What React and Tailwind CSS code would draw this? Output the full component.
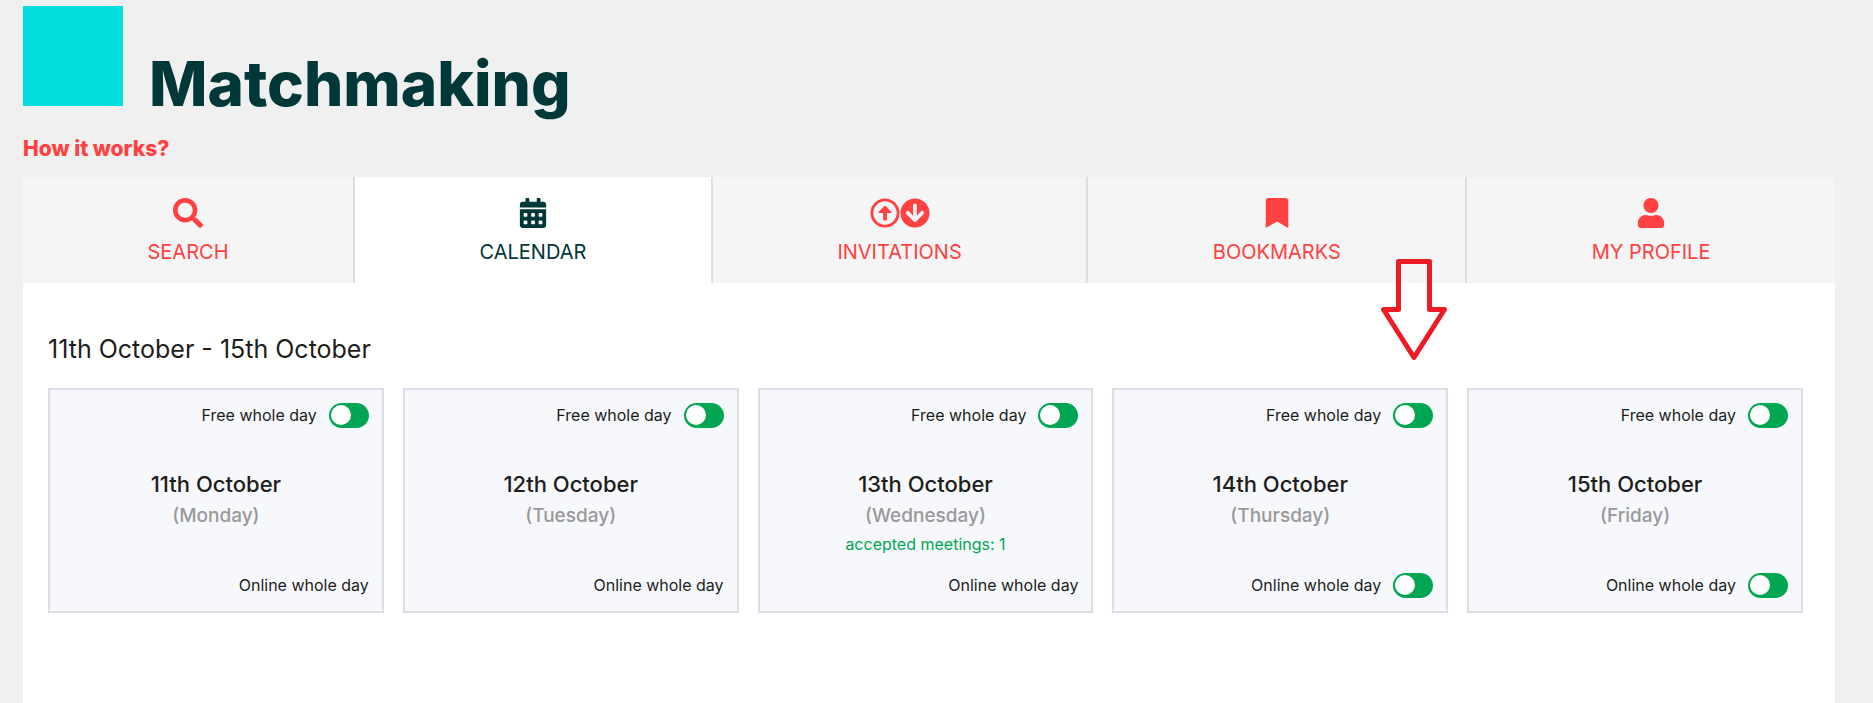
import { useState } from "react";
import {
  FaSearch,
  FaCalendarAlt,
  FaRegArrowAltCircleUp,
  FaArrowCircleDown,
  FaBookmark,
  FaUser,
} from "react-icons/fa";
import clsx from "clsx";

const tabs = [
  { id: "search", label: "SEARCH", icons: [FaSearch] },
  { id: "calendar", label: "CALENDAR", icons: [FaCalendarAlt] },
  { id: "invitations", label: "INVITATIONS", icons: [FaRegArrowAltCircleUp, FaArrowCircleDown] },
  { id: "bookmarks", label: "BOOKMARKS", icons: [FaBookmark] },
  { id: "profile", label: "MY PROFILE", icons: [FaUser] },
];

const days = [
  { date: "11th October", weekday: "Monday", online: false },
  { date: "12th October", weekday: "Tuesday", online: false },
  { date: "13th October", weekday: "Wednesday", online: false, meetings: 1 },
  { date: "14th October", weekday: "Thursday", online: true },
  { date: "15th October", weekday: "Friday", online: true },
];

function Toggle({ label }) {
  return (
    <label className="relative flex cursor-pointer items-center justify-end gap-3">
      <span>{label}</span>
      <input type="checkbox" role="switch" className="peer sr-only" />
      <span className="flex h-[25px] w-10 rounded-full bg-[#00a651] p-[2px] transition-all before:size-5 before:rounded-full before:bg-white peer-checked:justify-end" />
    </label>
  );
}

function DayCard({ date, weekday, online, meetings }) {
  return (
    <article className="flex min-h-[225px] flex-col border-2 border-[#dcdde6] bg-[#f6f8fc] p-[13px] text-base leading-[25px]">
      <Toggle label="Free whole day" />
      <div className="flex grow flex-col items-center pt-10 text-center">
        <h3 className="text-[22px] leading-8 font-medium">{date}</h3>
        <p className="text-[19px] leading-8 font-medium text-[#999]">({weekday})</p>
        {meetings && <p className="text-[#00a651]">accepted meetings: {meetings}</p>}
      </div>
      {online ? (
        <Toggle label="Online whole day" />
      ) : (
        <p className="text-right">Online whole day</p>
      )}
    </article>
  );
}

export default function App() {
  const [active, setActive] = useState("calendar");

  return (
    <div className="flex min-h-screen flex-col bg-[#f0f0f0] pt-[6px] pr-[38px] pl-[23px] font-['Inter',sans-serif] text-[#1d1d1b]">
      <header>
        <div className="flex items-baseline gap-[26px]">
          <div className="size-[100px] bg-[#00dede]" />
          <h1 className="text-[62px] leading-[70px] font-extrabold text-[#003737]">Matchmaking</h1>
        </div>
        <a href="#how" className="mt-4 block w-fit text-[21px] leading-7 font-extrabold text-[#ff4141]">
          How it works?
        </a>
      </header>

      <nav className="mt-[14px] flex bg-[#f5f5f5]">
        {tabs.map(({ id, label, icons }) => (
          <button
            key={id}
            type="button"
            onClick={() => setActive(id)}
            className={clsx(
              "flex h-[106px] flex-auto flex-col items-center gap-2 border-r-2 border-[#dedede] pt-[21px] text-xl leading-8 last:border-r-0",
              active === id ? "bg-white text-[#003737]" : "text-[#ff4141]"
            )}
          >
            <span className="flex text-[30px]">
              {icons.map((Icon, i) => (
                <Icon key={i} />
              ))}
            </span>
            {label}
          </button>
        ))}
      </nav>

      <main className="relative grow bg-white pt-12 pr-8 pb-[90px] pl-[25px]">
        <h2 className="text-[25px] leading-9">11th October - 15th October</h2>
        <div className="mt-[21px] grid grid-cols-5 gap-[19px]">
          {days.map((day) => (
            <DayCard key={day.date} {...day} />
          ))}
        </div>

        {/* Pointer to the fourth day */}
        <svg
          className="pointer-events-none absolute -top-6 right-[386px]"
          width="68"
          height="104"
          viewBox="0 0 68 104"
          fill="none"
          stroke="#ed1c24"
          strokeWidth="5"
          strokeLinejoin="round"
        >
          <path d="M17.5 2.5H48.5V50.5H63.5L33 98.5L2.5 50.5H17.5Z" />
        </svg>
      </main>
    </div>
  );
}
